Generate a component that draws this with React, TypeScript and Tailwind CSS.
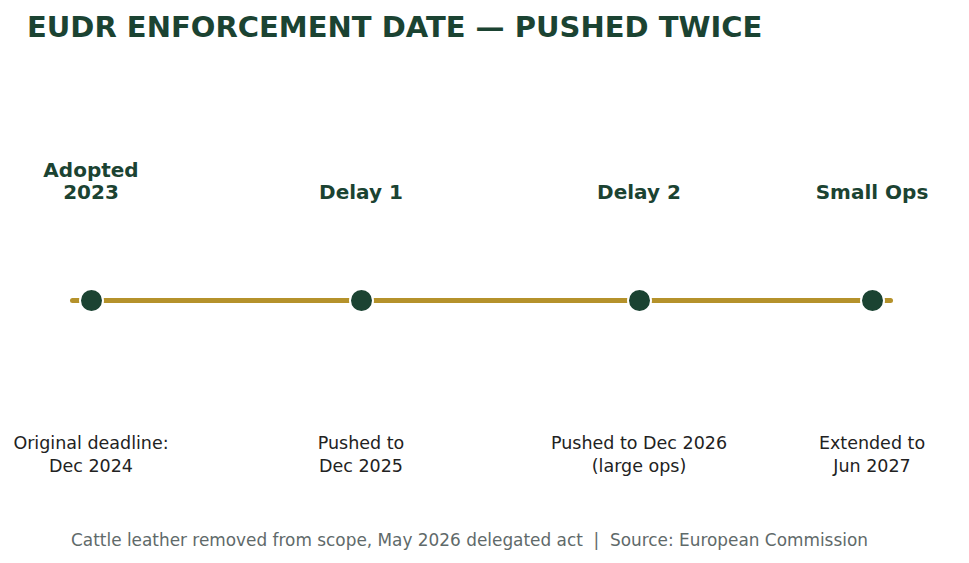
import React from "react";

interface Milestone {
  label: string[];
  detail: string[];
  offset: string;
}

const milestones: Milestone[] = [
  { label: ["Adopted", "2023"], detail: ["Original deadline:", "Dec 2024"], offset: "ml-[91px]" },
  { label: ["Delay 1"], detail: ["Pushed to", "Dec 2025"], offset: "ml-[270px]" },
  { label: ["Delay 2"], detail: ["Pushed to Dec 2026", "(large ops)"], offset: "ml-[278px]" },
  { label: ["Small Ops"], detail: ["Extended to", "Jun 2027"], offset: "ml-[233px]" },
];

export default function App() {
  return (
    <div
      className="relative h-[563px] w-[969px] overflow-hidden bg-white"
      style={{ fontFamily: '"DejaVu Sans", "Liberation Sans", sans-serif' }}
    >
      <h1 className="pl-[27px] pt-[12.5px] text-[29px] font-bold leading-none text-[#1b4332]">
        EUDR ENFORCEMENT DATE — PUSHED TWICE
      </h1>

      <div className="relative mt-[108.5px] flex">
        {/* the track the dots sit on */}
        <div className="absolute left-[70px] top-[147.5px] h-[5px] w-[823px] rounded-full bg-[#b5922b]" />

        {milestones.map((m) => (
          <div key={m.label.join(" ")} className={`${m.offset} flex w-0 flex-col items-center`}>
            <div className="flex h-[53px] flex-col justify-end whitespace-nowrap text-center text-[20px] font-bold leading-[22px] text-[#1b4332]">
              {m.label.map((l) => (
                <span key={l}>{l}</span>
              ))}
            </div>
            <div className="relative z-10 mt-[84.5px] h-[25px] w-[25px] shrink-0 rounded-full border-2 border-white bg-[#1b4332]" />
            <div className="mt-[119px] flex flex-col whitespace-nowrap text-center text-[17.5px] leading-[23px] text-[#222222]">
              {m.detail.map((d) => (
                <span key={d}>{d}</span>
              ))}
            </div>
          </div>
        ))}
      </div>

      <p className="mt-[51px] pr-[30px] text-center text-[16.9px] leading-[23px] text-[#5f6a6a] whitespace-pre">
        {"Cattle leather removed from scope, May 2026 delegated act  |  Source: European Commission"}
      </p>
    </div>
  );
}
